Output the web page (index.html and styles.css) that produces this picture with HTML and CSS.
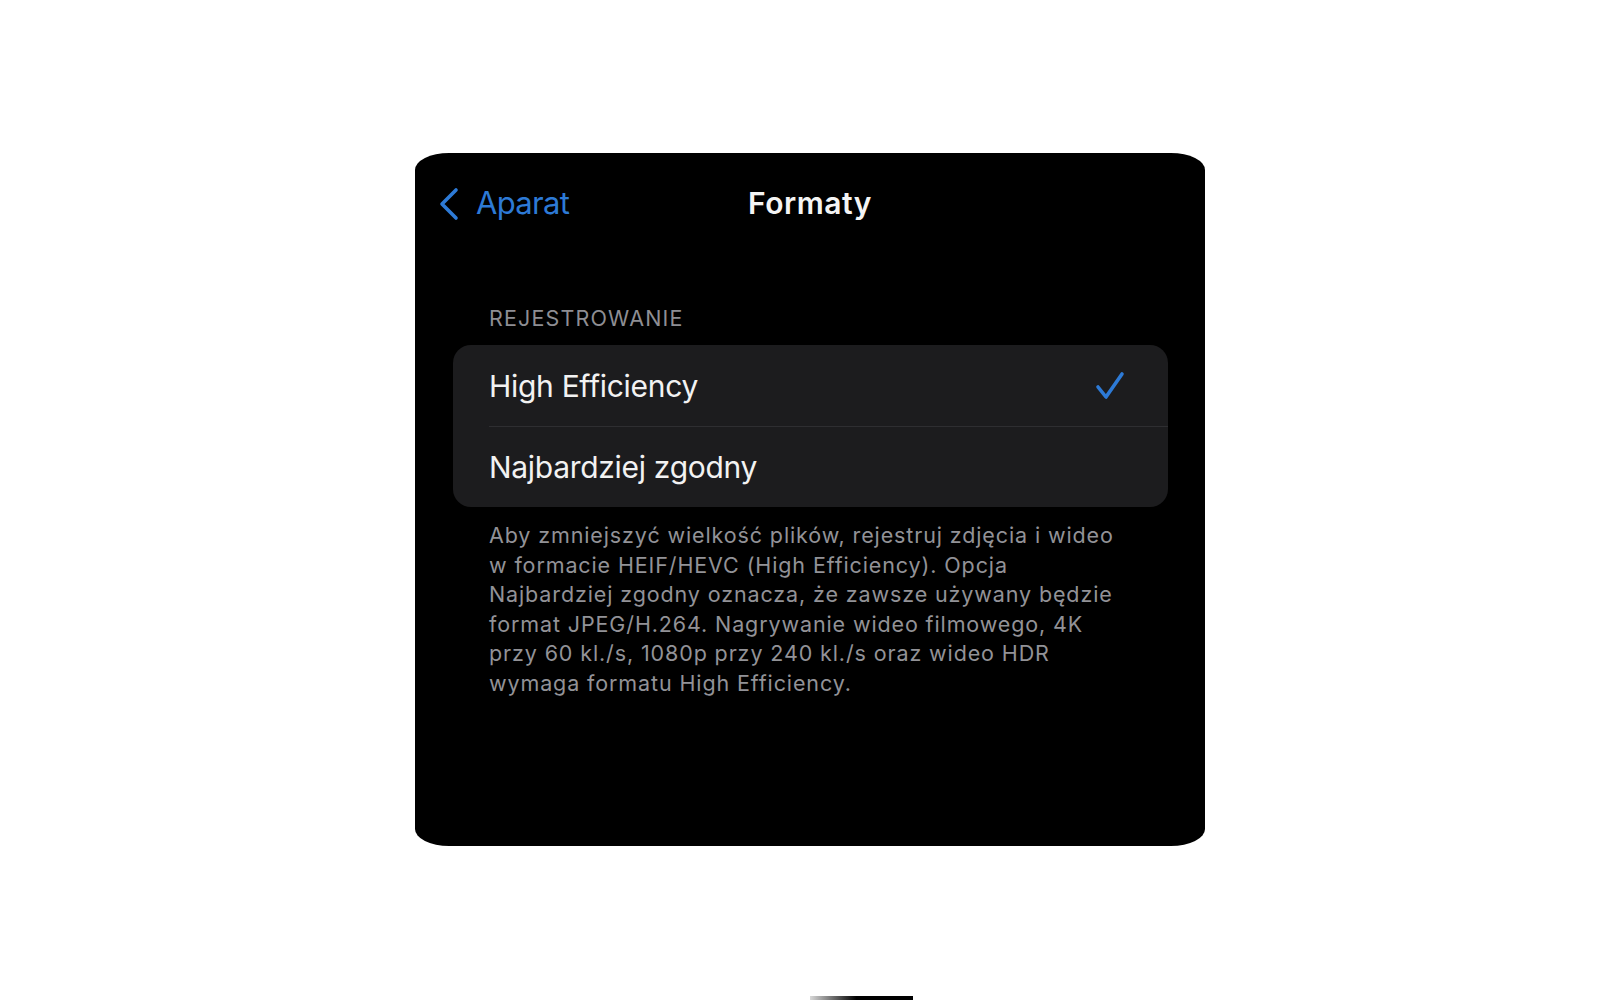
FILE: index.html
```html
<!DOCTYPE html>
<html lang="pl">
<head>
<meta charset="utf-8">
<title>Formaty</title>
<link rel="stylesheet" href="styles.css">
</head>
<body>
  <main class="screen">
    <header class="navbar">
      <a class="back" href="#">
        <svg class="chevron" width="22" height="34" viewBox="0 0 22 34" aria-hidden="true">
          <path d="M18 3 L4 17 L18 31" fill="none" stroke="currentColor" stroke-width="3.6" stroke-linecap="round" stroke-linejoin="round"/>
        </svg>
        <span>Aparat</span>
      </a>
      <h1 class="title">Formaty</h1>
      <span class="spacer"></span>
    </header>

    <section class="group">
      <h2 class="group-label">REJESTROWANIE</h2>
      <ul class="list">
        <li class="row">
          <span>High Efficiency</span>
          <svg class="check" width="30" height="30" viewBox="0 0 30 30" aria-hidden="true">
            <path d="M3 16 L11 26 L27 3" fill="none" stroke="currentColor" stroke-width="3.6" stroke-linecap="round" stroke-linejoin="round"/>
          </svg>
        </li>
        <li class="row">
          <span>Najbardziej zgodny</span>
        </li>
      </ul>
      <p class="footnote">Aby zmniejszyć wielkość plików, rejestruj zdjęcia i wideo<br>w formacie HEIF/HEVC (High Efficiency). Opcja<br>Najbardziej zgodny oznacza, że zawsze używany będzie<br>format JPEG/H.264. Nagrywanie wideo filmowego, 4K<br>przy 60 kl./s, 1080p przy 240 kl./s oraz wideo HDR<br>wymaga formatu High Efficiency.</p>
    </section>
  </main>
  <div class="edge"></div>
</body>
</html>
```

FILE: styles.css
```css
html, body {
  margin: 0;
  padding: 0;
  background: #ffffff;
  overflow: hidden;
}

body {
  font-family: Inter, "Noto Sans", "Liberation Sans", sans-serif;
  height: 1000px;
}

.screen {
  box-sizing: border-box;
  width: 790px;
  height: 693px;
  margin: 153px 0 0 415px;
  background: #000000;
  border-radius: 34px / 17px;
  display: flex;
  flex-direction: column;
}

/* navigation bar */
.navbar {
  height: 99px;
  padding: 0 23px;
  display: grid;
  grid-template-columns: 1fr auto 1fr;
  align-items: center;
}

.back {
  display: flex;
  align-items: center;
  gap: 16px;
  color: #2d7ad6;
  text-decoration: none;
  font-size: 31px;
  letter-spacing: -0.7px;
}

.chevron {
  display: block;
  margin-top: 2px;
}

.title {
  margin: 0;
  color: #f4f4f4;
  font-size: 30px;
  font-weight: 600;
  letter-spacing: 0.5px;
}

/* settings group */
.group {
  padding: 0 37px 0 38px;
}

.group-label {
  margin: 53px 0 14px 36px;
  color: #8e8e93;
  font-size: 21.5px;
  font-weight: 400;
  line-height: 26px;
  letter-spacing: 1.15px;
}

.list {
  list-style: none;
  margin: 0;
  padding: 0;
  background: #1c1c1e;
  border-radius: 18px;
}

.row {
  position: relative;
  height: 81px;
  padding: 0 43px 0 36px;
  display: flex;
  align-items: center;
  justify-content: space-between;
  color: #f2f2f2;
  font-size: 30px;
  letter-spacing: -0.3px;
}

.row + .row::before {
  content: "";
  position: absolute;
  left: 36px;
  right: 0;
  top: 0;
  height: 1px;
  background: #2e2e31;
}

.check {
  color: #2d7ad6;
}

.footnote {
  margin: 14px 0 0 36px;
  color: #929297;
  font-size: 21.5px;
  line-height: 29.5px;
  letter-spacing: 0.88px;
}

/* partial bar at the bottom edge */
.edge {
  width: 103px;
  height: 4px;
  margin: 150px 0 0 810px;
  background: linear-gradient(to right, #d8d8d8, #000000 45%);
}
```
